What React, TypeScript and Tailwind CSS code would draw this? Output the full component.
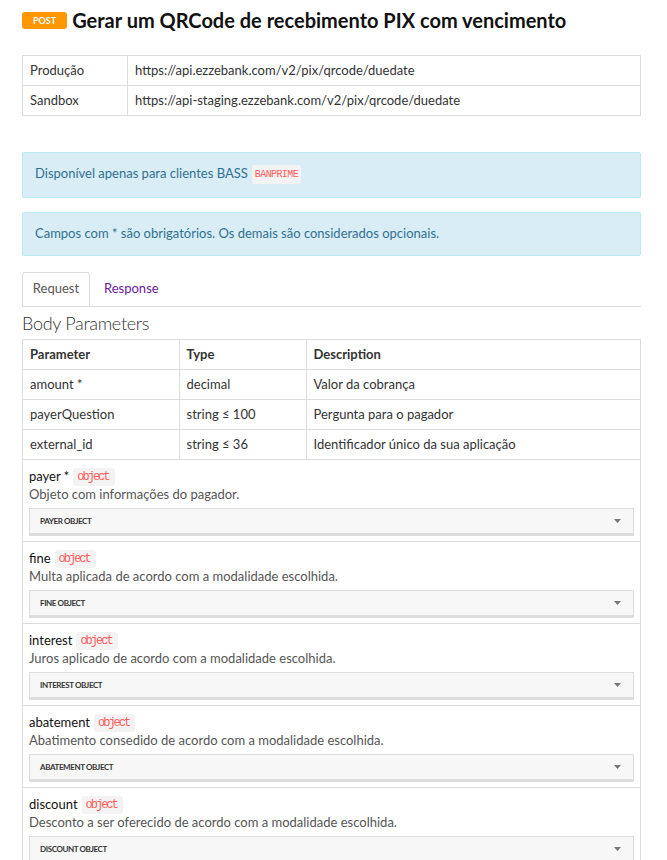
import React from "react";

const objs = [
  { name: "payer", req: true, desc: "Objeto com informações do pagador.", label: "PAYER OBJECT" },
  { name: "fine", req: false, desc: "Multa aplicada de acordo com a modalidade escolhida.", label: "FINE OBJECT" },
  { name: "interest", req: false, desc: "Juros aplicado de acordo com a modalidade escolhida.", label: "INTEREST OBJECT" },
  { name: "abatement", req: false, desc: "Abatimento consedido de acordo com a modalidade escolhida.", label: "ABATEMENT OBJECT" },
  { name: "discount", req: false, desc: "Desconto a ser oferecido de acordo com a modalidade escolhida.", label: "DISCOUNT OBJECT" },
];

const rows = [
  ["amount *", "decimal", "Valor da cobrança"],
  ["payerQuestion", "string ≤ 100", "Pergunta para o pagador"],
  ["external_id", "string ≤ 36", "Identificador único da sua aplicação"],
];

function Code({ children }: { children: React.ReactNode }) {
  return (
    <code className="rounded-[3px] bg-[#f3f3f3] py-[2px] pl-[4px] pr-[6px] text-[12px] tracking-[-2px] text-[#ff5b5b] [font-family:'Liberation_Mono',monospace]">
      {children}
    </code>
  );
}

export default function App() {
  return (
    <div className="min-h-[860px] bg-white pl-[22px] pr-[26px] pt-[10px] text-[13px] text-[#333] [font-family:Lato,'Liberation_Sans',sans-serif]">
      <div className="flex items-center gap-[5px]">
        <span className="rounded-[3px] bg-[#ff9800] px-[11px] py-[3px] text-[9px] font-bold leading-[11px] text-white">POST</span>
        <h1 className="text-[20px] font-bold leading-[20px] text-[#111] [font-family:Lato,sans-serif]">
          Gerar um QRCode de recebimento PIX com vencimento
        </h1>
      </div>

      <table className="mt-[25px] w-full border-collapse">
        <tbody>
          <tr className="h-[30px]">
            <td className="w-[105px] border border-[#ddd] px-[7px]">Produção</td>
            <td className="border border-[#ddd] px-[7px]">https://api.ezzebank.com/v2/pix/qrcode/duedate</td>
          </tr>
          <tr className="h-[30px]">
            <td className="border border-[#ddd] px-[7px]">Sandbox</td>
            <td className="border border-[#ddd] px-[7px]">https://api-staging.ezzebank.com/v2/pix/qrcode/duedate</td>
          </tr>
        </tbody>
      </table>

      <div className="mt-[36px] flex h-[46px] items-center rounded-[2px] border border-[#bce8f1] bg-[#d9edf7] px-[12px] pb-[2px] text-[#31708f]">
        <span>Disponível apenas para clientes BASS</span>
        <span className="ml-[4px] rounded-[3px] bg-[#f3f3f3] px-[3px] py-[2px] text-[10px] tracking-[-0.6px] text-[#ff5b5b] [font-family:'Liberation_Mono',monospace]">BANPRIME</span>
      </div>

      <div className="mt-[14px] flex h-[44px] items-center rounded-[2px] border border-[#bce8f1] bg-[#d9edf7] px-[12px] text-[#31708f]">
        Campos com * são obrigatórios. Os demais são considerados opcionais.
      </div>

      <div className="mt-[16px] flex border-b border-[#ddd]">
        <div className="-mb-px flex h-[34px] w-[68px] items-center justify-center rounded-t-[3px] border border-[#ddd] border-b-white bg-white text-[#555]">Request</div>
        <div className="flex h-[34px] items-center px-[14px] text-[#6a1b9a]">Response</div>
      </div>

      <h2 className="mt-[5px] text-[18px] font-light leading-[22px] tracking-[-0.3px] text-[#333] [font-family:Lato,sans-serif]">Body Parameters</h2>

      <div className="mt-[5px] border-x border-[#ddd]">
        <table className="w-full border-collapse">
          <thead>
            <tr className="h-[30px]">
              <th className="w-[156px] border-y border-r border-[#ddd] px-[7px] text-left font-bold">Parameter</th>
              <th className="w-[127px] border border-[#ddd] px-[7px] text-left font-bold">Type</th>
              <th className="border-y border-l border-[#ddd] px-[7px] text-left font-bold">Description</th>
            </tr>
          </thead>
          <tbody>
            {rows.map((r) => (
              <tr key={r[0]} className="h-[30px]">
                <td className="border-y border-r border-[#ddd] px-[7px]">{r[0]}</td>
                <td className="border border-[#ddd] px-[7px]">{r[1]}</td>
                <td className="border-y border-l border-[#ddd] px-[7px]">{r[2]}</td>
              </tr>
            ))}
          </tbody>
        </table>
        {objs.map((o) => (
          <div key={o.name} className="h-[82px] border-b border-[#ddd] px-[6px] pt-[6px]">
            <div className="flex items-center leading-[18px]">
              <span className="text-[#111]">{o.name}{o.req ? " *" : ""}</span>
              <span className="ml-[4px]"><Code>object</Code></span>
            </div>
            <div className="leading-[17px] text-[#555]">{o.desc}</div>
            <div className="mt-[5px] flex h-[28px] items-center justify-between border border-b-[3px] border-[#ddd] bg-[#f7f7f7] px-[10px]">
              <span className="text-[8px] font-bold tracking-[-0.4px] text-[#333]">{o.label}</span>
              <svg width="7" height="4" viewBox="0 0 7 4" className="mr-[2px]"><path d="M0 0h7L3.5 4z" fill="#777" /></svg>
            </div>
          </div>
        ))}
      </div>
    </div>
  );
}
